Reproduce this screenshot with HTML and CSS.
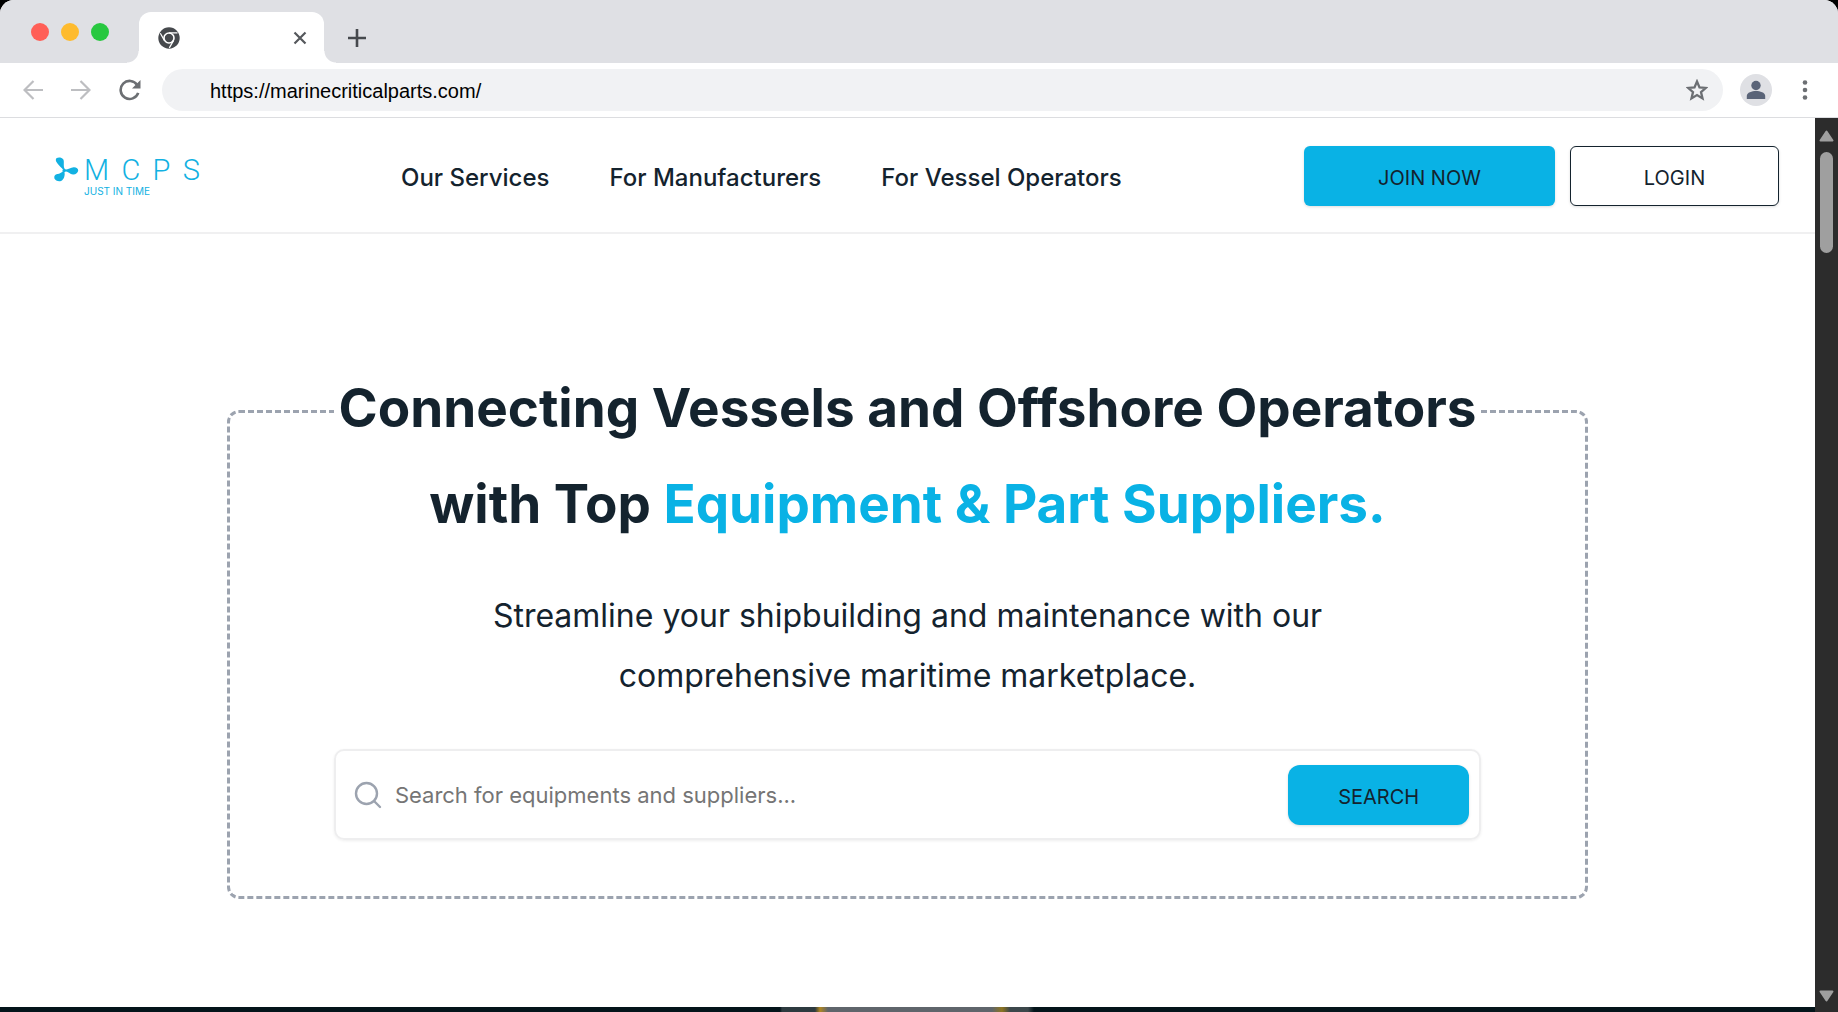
FILE: index.html
```html
<!DOCTYPE html>
<html lang="en">
<head>
<meta charset="utf-8">
<meta name="viewport" content="width=device-width, initial-scale=1">
<title>MCPS - Marine Critical Parts</title>
<link rel="stylesheet" href="styles.css">
</head>
<body>
<div class="window">
  <div class="tabstrip">
    <div class="lights"><span class="light red"></span><span class="light amber"></span><span class="light green"></span></div>
    <div class="tab">
      <svg width="22" height="22" viewBox="0 0 22 22" aria-hidden="true">
        <circle cx="11" cy="11" r="10.7" fill="#46494d"/>
        <circle cx="11" cy="11" r="5" fill="#46494d" stroke="#fff" stroke-width="1.6"/>
        <path d="M11 5.800h8.500M6.500 13.600L2.300 6.300M15.500 13.600L11.300 20.900" stroke="#fff" stroke-width="1.2" fill="none"/>
      </svg>
      <button class="icon-btn" aria-label="Close tab"><svg width="14" height="14" viewBox="0 0 14 14"><path d="M1.5 1.5l11 11M12.5 1.5l-11 11" stroke="#55585c" stroke-width="2.2"/></svg></button>
    </div>
    <button class="icon-btn new-tab" aria-label="New tab"><svg width="18" height="18" viewBox="0 0 18 18"><path d="M9 0v18M0 9h18" stroke="#46494d" stroke-width="2.6"/></svg></button>
  </div>
  <div class="toolbar">
    <div class="nav-buttons">
      <button class="icon-btn" aria-label="Back"><svg width="20" height="20" viewBox="0 0 20 20" fill="none" stroke="#bdbec1" stroke-width="2.2"><path d="M20 10H2M10.5 1L1.5 10l9 9"/></svg></button>
      <button class="icon-btn" aria-label="Forward"><svg width="20" height="20" viewBox="0 0 20 20" fill="none" stroke="#bdbec1" stroke-width="2.2"><path d="M0 10h18M9.500 1l9 9-9 9"/></svg></button>
      <button class="icon-btn" aria-label="Reload"><svg width="22" height="22" viewBox="0 0 22 22"><path d="M18.2 6A9 9 0 1 0 19.200 13.800" fill="none" stroke="#6c6f73" stroke-width="2.6"/><path d="M21.500 1v8.500H13z" fill="#6c6f73"/></svg></button>
    </div>
    <div class="address">
      <input class="url" type="text" aria-label="Address" value="https://marinecriticalparts.com/">
      <button class="icon-btn" aria-label="Bookmark"><svg width="22" height="22" viewBox="0 0 22 22"><path d="M11 2.500l2.500 5.900 6.400.5-4.900 4.200 1.500 6.300L11 16l-5.500 3.400L7 13.100 2.100 8.900l6.400-.5z" fill="none" stroke="#6c6f73" stroke-width="2.300"/></svg></button>
    </div>
    <button class="icon-btn avatar" aria-label="Profile"><svg width="20" height="20" viewBox="0 0 20 20" fill="#5a6478"><circle cx="10" cy="5.500" r="4.700"/><path d="M.8 19v-3.200C.8 12.500 6 11 10 11s9.200 1.500 9.200 4.800V19z"/></svg></button>
    <button class="icon-btn" aria-label="Menu"><svg width="6" height="22" viewBox="0 0 6 22" fill="#6c6f73"><circle cx="3" cy="3.500" r="2.300"/><circle cx="3" cy="11" r="2.300"/><circle cx="3" cy="18.500" r="2.300"/></svg></button>
  </div>
  <div class="viewport">
    <div class="page">
      <header class="site-header">
        <a class="logo" href="#" aria-label="MCPS Just in time">
          <svg width="26" height="30" viewBox="0 0 26 30" fill="#12b1e2" aria-hidden="true">
            <path d="M10 14.500C7.500 11.500 3 8 2.800 5 2.800 2.500 6 2.200 8.500 3c2.500.8 2.500 3.500 2.300 6-.1 2.300.2 3.800.9 5z"/>
            <path d="M12 14.700C15.500 14.600 18 12 21 12.200c2.500.2 4.300 1.600 4.200 3.300-.2 2.200-2.700 4.300-5.200 4-3-.4-5-3-8-3.300z"/>
            <path d="M11.300 16.800c1.200 3.200-.5 8.200-3.300 9.200-2.700.8-5.800-.5-6.600-2.500-.6-2.400.6-3.900 3-4.500 2.400-.5 4-1.200 5.500-2.800z"/>
            <circle cx="11.200" cy="15.500" r="1.700"/>
          </svg>
          <span class="logo-text"><span class="logo-name"><span>M</span><span>C</span><span>P</span><span>S</span></span><span class="logo-tag">JUST IN TIME</span></span>
        </a>
        <nav class="site-nav"><a href="#">Our Services</a><a href="#">For Manufacturers</a><a href="#">For Vessel Operators</a></nav>
        <div class="actions"><button class="btn join">JOIN NOW</button><button class="btn login">LOGIN</button></div>
      </header>
      <main class="hero">
        <section class="frame">
          <h1>Connecting Vessels and Offshore Operators<br>with Top <span class="accent">Equipment &amp; Part Suppliers.</span></h1>
          <p class="lead">Streamline your shipbuilding and maintenance with our<br>comprehensive maritime marketplace.</p>
          <form class="search">
            <svg width="28" height="28" viewBox="0 0 28 28" fill="none" stroke="#9ca3af" stroke-width="2.400" stroke-linecap="round" aria-hidden="true"><circle cx="12.500" cy="12.500" r="10.500"/><path d="M20.500 20.500l5.500 5.500"/></svg>
            <input class="query" type="text" aria-label="Search" placeholder="Search for equipments and suppliers...">
            <button class="btn search-btn" type="button">SEARCH</button>
          </form>
        </section>
      </main>
      <div class="banner"></div>
    </div>
    <div class="scrollbar" aria-hidden="true">
      <svg width="15" height="12" viewBox="0 0 15 12"><path d="M7.500 1.500L13.500 10.500h-12z" fill="#9f9f9f" stroke="#9f9f9f" stroke-width="2" stroke-linejoin="round"/></svg>
      <div class="thumb"></div>
      <svg width="15" height="12" viewBox="0 0 15 12"><path d="M7.500 10.500L13.500 1.500h-12z" fill="#9f9f9f" stroke="#9f9f9f" stroke-width="2" stroke-linejoin="round"/></svg>
    </div>
  </div>
</div>
</body>
</html>
```
FILE: styles.css
```css
* { box-sizing: border-box; }
body { margin: 0; background: #000; color: #14232e; font-family: Inter, "Noto Sans", sans-serif; }
button, input { font: inherit; color: inherit; border: 0; padding: 0; background: none; }
a { color: inherit; text-decoration: none; }
svg { display: block; flex: none; }
.icon-btn { display: grid; place-items: center; flex: none; }

.window { height: 100vh; display: flex; flex-direction: column; overflow: hidden; background: #fff; border-radius: 14px 14px 0 0; }

.tabstrip { height: 63px; flex: none; display: flex; align-items: flex-end; background: #dfe0e4; }
.lights { display: flex; gap: 12px; padding: 0 30px 22px 31px; }
.light { width: 18px; height: 18px; border-radius: 50%; }
.red { background: #ff5f57; }
.amber { background: #febb2e; }
.green { background: #28c840; }
.tab { position: relative; width: 185px; height: 51px; padding: 0 17px 0 19px; display: flex; align-items: center; justify-content: space-between; background: #fff; border-radius: 12px 12px 0 0; }
.tab::before, .tab::after { content: ""; position: absolute; bottom: 0; width: 12px; height: 12px; }
.tab::before { right: 100%; background: radial-gradient(circle at 0 0, #dfe0e4 11px, #fff 12px); }
.tab::after { left: 100%; background: radial-gradient(circle at 100% 0, #dfe0e4 11px, #fff 12px); }
.new-tab { height: 51px; margin-left: 24px; }

.toolbar { height: 55px; flex: none; display: flex; align-items: center; padding: 0 30px 0 23px; border-bottom: 1px solid #dcdde0; }
.nav-buttons { display: flex; align-items: center; gap: 28px; width: 139px; flex: none; }
.address { flex: 1; height: 42px; margin-right: 17px; padding: 0 15px 0 48px; display: flex; align-items: center; background: #f1f2f4; border-radius: 21px; }
.url { flex: 1; height: 42px; padding-top: 3px; font-family: "Liberation Sans", sans-serif; font-size: 20px; color: #000; }
.avatar { width: 32px; height: 32px; margin-right: 30px; border-radius: 50%; background: #dfe0e4; }

.viewport { flex: 1; min-height: 0; display: flex; }
.page { flex: 1; min-width: 0; display: flex; flex-direction: column; }
.scrollbar { width: 23px; flex: none; padding: 12px 0 10px; display: flex; flex-direction: column; align-items: center; background: #2c2c2c; }
.thumb { width: 13px; height: 101px; margin: 10px 0 auto; border-radius: 7px; background: #9f9f9f; }

.site-header { height: 116px; flex: none; display: flex; align-items: center; padding: 2px 36px 0 53px; border-bottom: 2px solid #f0f0f1; }
.logo { display: flex; gap: 5px; width: 348px; color: #12b1e2; }
.logo-text { display: flex; flex-direction: column; }
.logo-name { display: flex; justify-content: space-between; width: 116px; font: 300 29px/30px Roboto, sans-serif; }
.logo-tag { font-size: 10px; line-height: 12px; }
.site-nav { display: flex; gap: 60px; padding-top: 4px; font-size: 24px; font-weight: 500; line-height: 32px; white-space: nowrap; }
.actions { display: flex; gap: 15px; margin-left: auto; }
.btn { height: 60px; padding-top: 4px; border-radius: 6px; font-size: 20px; white-space: nowrap; box-shadow: 0 1px 3px #0002; }
.join { width: 251px; background: #09b2e5; }
.login { width: 209px; background: #fff; border: 1px solid #14232e; }

.hero { padding: 176px 0 108px; }
.frame { width: 75%; margin: 0 auto; padding: 0 104px 56px; border: 3px dashed #9ca3af; border-radius: 12px; }
h1 { margin: -53px 0 0; background: #fff; text-align: center; font-size: 53px; line-height: 96px; font-weight: 700; white-space: nowrap; }
.accent { color: #09b2e5; }
.lead { margin: 34px 0 43px; text-align: center; font-size: 32px; line-height: 60px; }
.search { height: 91px; display: flex; align-items: center; padding: 0 10px 0 18px; border: 2px solid #eeeeef; border-radius: 10px; box-shadow: 0 1px 3px #0001; }
.query { flex: 1; height: 60px; margin-left: 13px; font-size: 22px; }
.query::placeholder { color: #757575; opacity: 1; }
.search-btn { width: 181px; border-radius: 12px; background: #09b2e5; }

.banner { flex: 1; min-height: 5px; background: linear-gradient(90deg, transparent 780px, #2d3a3f 782px 815px, #b08620 820px, #5f656b 828px 992px, #8d7420 1002px, #3c474b 1010px 1028px, transparent 1034px) #04141a; }
```
